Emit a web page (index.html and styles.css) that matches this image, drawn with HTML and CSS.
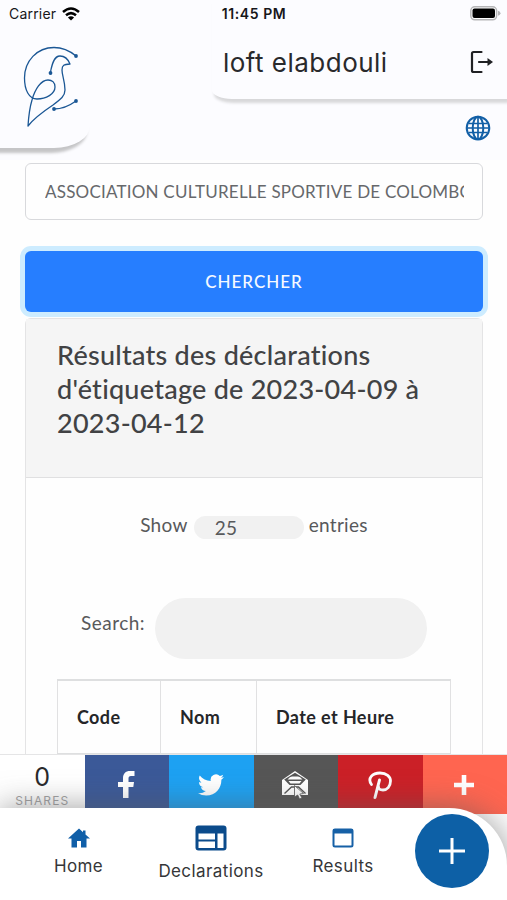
FILE: index.html
```html
<!DOCTYPE html>
<html lang="fr">
<head>
    <meta charset="UTF-8">
    <title>Loft - Declarations</title>
    <link rel="stylesheet" href="styles.css">
</head>
<body>
    <div class="header">
        <div class="logo-panel">
            <svg class="logo" viewBox="0 0 60 86" width="60" height="86" fill="none" stroke="#1b5795" stroke-width="1.3" stroke-linejoin="round">
                <path d="M56 13C50 8 42 4.500 34 4.500C17 4.500 4.500 18 4.500 35C4.500 47 9 56 17 56C26 56 35 51 35 44C35 39.500 32 37 28 37C21 37 15 46 12 57C9 67 8.500 75 8 83C15 74 24 68 33 62C41 56 45 53 45 47C45 38 42 33 42 27C42 22 44 21.500 50 21C48 16 45 13 40 13C34 13 32 21 30.500 29"/>
                <path d="M34 66Q45 66 56 58"/>
                <g fill="#1b5795" stroke="none">
                    <circle cx="56" cy="13" r="1.900"/>
                    <circle cx="30.500" cy="30" r="1.900"/>
                    <circle cx="34" cy="66" r="1.900"/>
                    <circle cx="56" cy="58" r="1.900"/>
                </g>
            </svg>
        </div>
        <div class="user-panel">
            <span class="user-name">loft elabdouli</span>
            <svg class="logout" viewBox="0 0 24 24" width="24" height="24" fill="none" stroke="#202124" stroke-width="2.200">
                <path d="M11.500 2H3.500Q2 2 2 3.500V20.500Q2 22 3.500 22H11.500M9 12H20" stroke-linecap="round"/>
                <path d="M17.500 8L23 12L17.500 16Z" fill="#202124" stroke="none"/>
            </svg>
        </div>
        <svg class="globe" viewBox="0 0 26 26" width="26" height="26" fill="none" stroke="#125fa6" stroke-width="2">
            <circle cx="13" cy="13" r="11.300"/>
            <ellipse cx="13" cy="13" rx="5.300" ry="11.300"/>
            <path d="M13 2V24M2 13H24M3.500 8.500H22.500M3.500 17.500H22.500" stroke-width="1.700"/>
        </svg>
        <div class="status-bar">
            <div class="carrier">
                <span>Carrier</span>
                <svg viewBox="0 0 18 14" width="18" height="14" fill="none" stroke="#000" stroke-width="2.500">
                    <path d="M1 5Q9 -2 17 5M4 8.300Q9 4 14 8.300"/>
                    <path d="M9 13.500L5.900 10.600Q9 8 12.100 10.600Z" fill="#000" stroke="none"/>
                </svg>
            </div>
            <div class="clock">11:45 PM</div>
            <svg class="battery" viewBox="0 0 31 15" width="31" height="15">
                <rect x=".8" y=".8" width="25.800" height="13" rx="4" fill="#fff" stroke="#b5b5b7" stroke-width="1.500"/>
                <rect x="2.500" y="2.500" width="22.500" height="9.600" rx="2" fill="#000"/>
                <path d="M28 4.800Q30.500 5.500 30.500 7.300Q30.500 9 28 9.800Z" fill="#b5b5b7"/>
            </svg>
        </div>
    </div>

    <div class="content">
        <div class="association"><div>ASSOCIATION CULTURELLE SPORTIVE DE COLOMBOPHILE</div></div>
        <button class="search-btn">CHERCHER</button>
        <div class="card">
            <div class="card-header">
                <h3>Résultats des déclarations<br>d'étiquetage de 2023-04-09 à<br>2023-04-12</h3>
            </div>
            <div class="card-body">
                <div class="entries">
                    <span>Show</span>
                    <div class="entries-select">25</div>
                    <span>entries</span>
                </div>
                <div class="search-row">
                    <label for="search">Search:</label>
                    <input type="text" id="search">
                </div>
                <table>
                    <tr>
                        <th class="code">Code</th>
                        <th class="nom">Nom</th>
                        <th class="date">Date et Heure</th>
                    </tr>
                </table>
            </div>
        </div>
    </div>

    <div class="share-bar">
        <div class="share-count">
            <span class="count">0</span>
            <span class="shares">SHARES</span>
        </div>
        <div class="share facebook">
            <svg viewBox="0 0 32 32" width="32" height="32" fill="#fff">
                <path d="M13 29V18H8V13H13V9.500C13 4.500 15.500 2 20 2H24.500V7H21C19 7 18.500 8 18.500 9.500V13H24L23.300 18H18.500V29Z"/>
            </svg>
        </div>
        <div class="share twitter">
            <svg viewBox="0 0 24 24" width="26" height="26" fill="#fff">
                <path d="M23.950 4.570a10 10 0 0 1-2.820.77 4.960 4.960 0 0 0 2.160-2.720c-.95.550-2 .95-3.120 1.180a4.920 4.920 0 0 0-8.390 4.480C7.690 8.090 4.070 6.130 1.640 3.160a4.920 4.920 0 0 0 1.520 6.570 4.900 4.900 0 0 1-2.230-.61v.06a4.920 4.920 0 0 0 3.950 4.830 5 5 0 0 1-2.210.08 4.940 4.940 0 0 0 4.600 3.420A9.870 9.870 0 0 1 0 19.540a14 14 0 0 0 7.550 2.210c9.050 0 14-7.500 14-13.980v-.64a9.900 9.900 0 0 0 2.400-2.560z"/>
            </svg>
        </div>
        <div class="share email">
            <svg viewBox="0 0 28 30" width="28" height="30">
                <path d="M1 10L14 1L27 10V25H1Z" fill="#fff"/>
                <path d="M3.200 9.500L14 2.800L24.800 9.500L19.500 15H8.500Z" fill="#565656"/>
                <path d="M6.500 9.500Q9 6.500 11 6.500H17Q19 6.500 21.500 9.500ZM7.500 11H20.500L18.500 13.500H9.500Z" fill="#fff"/>
                <path d="M3.500 23.500L10.500 17H17.500L24.500 23.500" fill="none" stroke="#565656" stroke-width="1.400"/>
                <path d="M13.500 15.500L22.500 23.500L18.800 24L21 28L18.500 29L16.700 25L13.500 27Z" fill="#fff" stroke="#565656" stroke-width=".8"/>
            </svg>
        </div>
        <div class="share pinterest">
            <svg viewBox="0 0 28 32" width="28" height="32" fill="none" stroke="#fff" stroke-linecap="round">
                <path d="M5.500 15.500C1 9 6.500 4 14 4C20.500 4 24.500 7.500 24.500 12C24.500 17.500 21 21 17 21C14 21 12.500 19.500 12.500 18" stroke-width="2.800"/>
                <path d="M13.500 11L9 28.500" stroke-width="3"/>
            </svg>
        </div>
        <div class="share more">
            <svg viewBox="0 0 20 20" width="20" height="20" stroke="#fff" stroke-width="4.600">
                <path d="M10 0V20M0 10H20"/>
            </svg>
        </div>
    </div>

    <div class="bottom-nav">
        <div class="nav-item home">
            <svg viewBox="0 0 22 20" width="22" height="20" fill="#105fa8">
                <path d="M11 .5L0 10.500H3.500V19.500H9V13H13V19.500H18.500V10.500H22L17.500 6.500V2.500H15V4.200Z"/>
            </svg>
            <span>Home</span>
        </div>
        <div class="nav-item declarations">
            <svg viewBox="0 0 32 26" width="32" height="26">
                <rect x=".5" y=".5" width="31" height="25" rx="3" fill="#0b4b8b"/>
                <path d="M3.500 8.500H20V14.500H3.500ZM3.500 16.500H20V23H3.500ZM22.500 8.500H28.500V23H22.500Z" fill="#fff"/>
            </svg>
            <span>Declarations</span>
        </div>
        <div class="nav-item results">
            <svg viewBox="0 0 22 20" width="22" height="20">
                <rect x="1.500" y="1.500" width="19" height="17" rx="1.500" fill="#fff" stroke="#1660a6" stroke-width="2"/>
                <path d="M1 1H21V5.500H1Z" fill="#1660a6"/>
            </svg>
            <span>Results</span>
        </div>
        <button class="add-btn">
            <svg viewBox="0 0 26 26" width="26" height="26" stroke="#fff" stroke-width="3">
                <path d="M13 0V26M0 13H26"/>
            </svg>
        </button>
    </div>
</body>
</html>
```
FILE: styles.css
```css
* {
    box-sizing: border-box;
}
body {
    margin: 0;
    height: 900px;
    display: flex;
    flex-direction: column;
    overflow: hidden;
    background: #fefefe;
    font-family: "HK Grotesk", Lato, sans-serif;
    color: #58595b;
}
svg {
    display: block;
    flex-shrink: 0;
}
span, th, label {
    white-space: nowrap;
}

/* header */
.header {
    position: relative;
    flex: 0 0 160px;
    display: grid;
    grid-template-columns: 90px 295px;
    grid-template-rows: 99px 61px;
    justify-content: space-between;
    background: #fcfcff;
    font-family: Inter, sans-serif;
}
.status-bar {
    position: absolute;
    top: 0;
    left: 0;
    width: 100%;
    height: 27px;
    padding: 0 6px 0 9px;
    display: grid;
    grid-template-columns: 1fr auto 1fr;
    align-items: center;
    color: #17171a;
}
.carrier {
    display: flex;
    gap: 6px;
    align-items: center;
    font-size: 14px;
    letter-spacing: 0.2px;
}
.clock {
    margin-right: 2px;
    font-size: 14px;
    font-weight: 600;
    letter-spacing: 0.6px;
}
.battery {
    justify-self: end;
}
.logo-panel {
    grid-row: 1 / 3;
    height: 148px;
    padding: 43px 0 0 20px;
    background: #fcfcff;
    border-bottom-right-radius: 36px 22px;
    box-shadow: -3px 5px 3px #c5c5c7;
}
.user-panel {
    display: flex;
    justify-content: space-between;
    align-items: flex-start;
    padding: 50px 13px 0 11px;
    background: #fcfcff;
    border-bottom-left-radius: 20px 9px;
    box-shadow: 2px 4px 3px #d8d8da;
}
.user-name {
    font-size: 26px;
    line-height: 26px;
    letter-spacing: 0.48px;
    color: #29292c;
}
.globe {
    justify-self: end;
    margin: 16px 16px 0 0;
}

/* search results */
.content {
    flex: 1;
    min-height: 0;
    overflow: hidden;
    padding: 3px 24px 0 25px;
}
.association {
    height: 57px;
    padding: 0 18px 0 19px;
    border: 1px solid #d8d9dc;
    border-radius: 6px;
    font-size: 17px;
    line-height: 55px;
    letter-spacing: 0.22px;
    color: #66686b;
}
.association div {
    overflow: hidden;
    white-space: nowrap;
}
.search-btn {
    display: block;
    width: 100%;
    height: 61px;
    margin: 31px 0 6px;
    border: none;
    border-radius: 6px;
    background: #267eff;
    box-shadow: 0 0 0 5px #cdecff;
    color: #f5f9ff;
    font-family: inherit;
    font-size: 17px;
    font-weight: 500;
    letter-spacing: 1px;
}
.card {
    border: 1px solid #e4e4e5;
    border-radius: 6px 6px 0 0;
}
.card-header {
    height: 159px;
    padding: 19px 31px 0;
    background: #f5f5f5;
    border-bottom: 1px solid #e0e0e1;
}
.card-header h3 {
    margin: 0;
    font-size: 27px;
    font-weight: 500;
    line-height: 34px;
    letter-spacing: 0.25px;
    color: #414244;
    white-space: nowrap;
}
.card-body {
    padding: 38px 31px 0;
}
.entries {
    display: flex;
    justify-content: center;
    font-size: 19px;
    line-height: 18px;
    letter-spacing: 0.3px;
}
.entries-select {
    width: 110px;
    height: 23px;
    margin: 0 5px 0 6px;
    padding: 3px 0 0 21px;
    border-radius: 12px;
    background: #f1f1f1;
}
.search-row {
    display: flex;
    justify-content: center;
    align-items: center;
    margin: 59px 0 20px;
    font-size: 19px;
    letter-spacing: 0.5px;
}
.search-row label {
    margin: 0 10px 12px 0;
}
.search-row input {
    width: 272px;
    height: 61px;
    border: none;
    border-radius: 31px;
    background: #f1f1f1;
}
table {
    width: 394px;
    table-layout: fixed;
    border-collapse: collapse;
    border-top: 2px solid #dedfe0;
}
th {
    height: 74px;
    padding: 0 18px 0 19px;
    border: 1px solid #e1e1e2;
    border-top: 2px solid #dedfe0;
    border-bottom: 3px solid #dedfe0;
    color: #252629;
    font-size: 18px;
    font-weight: 700;
    letter-spacing: 0.4px;
    text-align: left;
}
.code {
    width: 103px;
}
.nom {
    width: 96px;
}

/* share buttons */
.share-bar {
    flex: 0 0 60px;
    display: grid;
    grid-template-columns: repeat(6, 1fr);
    border-top: 1px solid #e5e5e6;
    background: #fff;
}
.share-count {
    display: flex;
    flex-direction: column;
    align-items: center;
    padding-top: 8px;
    font-family: Inter, sans-serif;
}
.count {
    font-size: 25px;
    line-height: 28px;
    color: #29292b;
}
.shares {
    font-size: 12px;
    line-height: 20px;
    letter-spacing: 1.1px;
    color: #a2a2a4;
}
.share {
    display: flex;
    justify-content: center;
    align-items: center;
    padding-right: 1px;
}
.facebook {
    background: #3b5998;
}
.twitter {
    background: #1da1f2;
}
.email {
    background: #565656;
}
.pinterest {
    background: #cb2027;
}
.more {
    background: #ff6550;
}

/* bottom navigation */
.bottom-nav {
    position: relative;
    flex: 0 0 92px;
    margin-top: -6px;
    background: #fff;
    border-top-right-radius: 58px;
    box-shadow: 0 0 32px rgba(90, 90, 90, 0.6);
    font-family: Inter, sans-serif;
    color: #353638;
    display: grid;
    grid-template-columns: 157px 108px 156px 86px;
}
.nav-item {
    display: flex;
    flex-direction: column;
    align-items: center;
    font-size: 17px;
    line-height: 22px;
    letter-spacing: 0.4px;
}
.home, .results {
    padding-top: 20px;
    gap: 7px;
}
.declarations {
    padding-top: 17px;
    gap: 9px;
}
.add-btn {
    width: 74px;
    height: 74px;
    margin: 6px 0 0 -6px;
    padding: 0;
    border: none;
    border-radius: 50%;
    background: #0d60a6;
    display: flex;
    justify-content: center;
    align-items: center;
}
```
